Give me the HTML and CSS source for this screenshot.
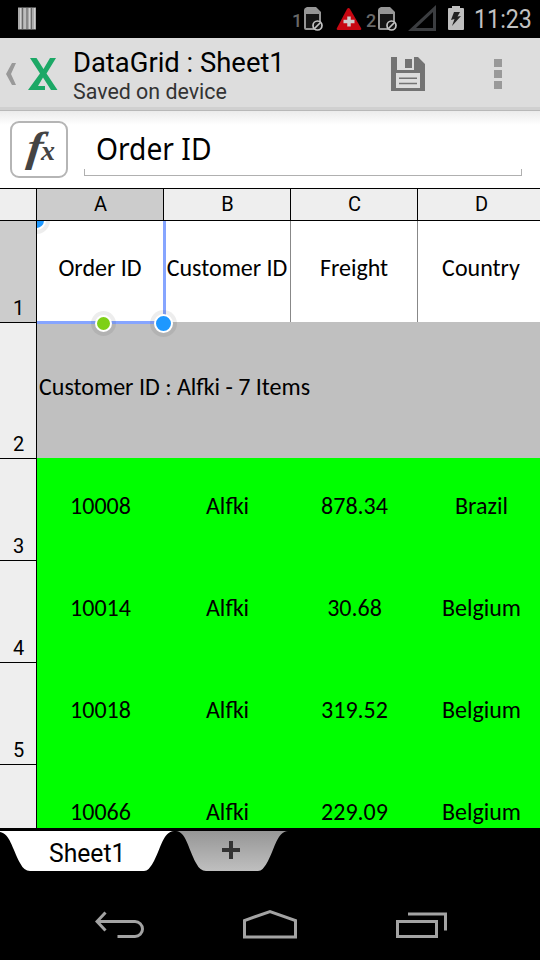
FILE: index.html
```html
<!DOCTYPE html>
<html lang="en">
<head>
<meta charset="utf-8">
<title>DataGrid : Sheet1</title>
<link rel="stylesheet" href="styles.css">
</head>
<body>
<div class="screen">
  <div class="status">
    <svg class="bars" width="18" height="23" viewBox="0 0 18 23"><path fill="#aaa" d="M0 .5h18v22H0z"/><path stroke="#696969" d="M4.500 1v21M9 1v21M13.500 1v21"/><path stroke="#d0d0d0" d="M2.500 1v21M7 1v21M11.500 1v21M16.500 1v21"/></svg>
    <div class="sim one"><span>1</span><svg width="20" height="25" viewBox="0 0 20 25"><path fill="#969696" d="M3 0h9l5 5v16q0 2-2 2H2q-2 0-2-2V3q0-2 3-3z"/><path fill="#161616" d="M2 7h13v14H2z"/><circle cx="13.500" cy="18.500" r="4.500" fill="#161616" stroke="#c4c4c4" stroke-width="1.700"/><path d="M10.500 21.500l6-6" stroke="#c4c4c4" stroke-width="1.700"/></svg></div>
    <svg class="alert" width="26" height="22" viewBox="0 0 26 22"><path fill="#c70712" d="M11 1q1.500-2 3 0l11 19q1 2-1 2H2q-2 0-1-2z"/><path d="M13 8.500v10M7.500 13.500h11" stroke="#ccc" stroke-width="3.500"/></svg>
    <div class="sim two"><span>2</span><svg width="20" height="25" viewBox="0 0 20 25"><path fill="#969696" d="M3 0h9l5 5v16q0 2-2 2H2q-2 0-2-2V3q0-2 3-3z"/><path fill="#161616" d="M2 7h13v14H2z"/><circle cx="13.500" cy="18.500" r="4.500" fill="#161616" stroke="#c4c4c4" stroke-width="1.700"/><path d="M10.500 21.500l6-6" stroke="#c4c4c4" stroke-width="1.700"/></svg></div>
    <svg class="signal" width="28" height="26" viewBox="0 0 28 26"><path fill="#3b3d40" fill-rule="evenodd" d="M28 0v26H0zM25 7v16H8z"/></svg>
    <svg class="battery" width="16" height="24" viewBox="0 0 16 24"><path fill="#bfbfbf" d="M4 0h8v2h3q1 0 1 1v20q0 1-1 1H1q-1 0-1-1V3q0-1 1-1h3z"/><path fill="#222" d="M6 6h6l-2.500 4.500L13 10 4 20l2.500-7L3 14z"/></svg>
    <span class="clock">11:23</span>
  </div>
  <header class="appbar">
    <svg class="back" width="10" height="22" viewBox="0 0 10 22"><path fill="#999" d="M6 0h4L5 11l5 11H6L0 11z"/></svg>
    <svg class="logo" width="30" height="32" viewBox="0 0 30 32"><path fill="#1ca866" d="M2 0h6.500l7 11 6.500-11h6L18.500 15.500 29.500 32H23l-8-12.500-5 8.500h7v4H0L12 15.500z"/></svg>
    <div class="titles"><div class="title">DataGrid : Sheet1</div><div class="sub">Saved on device</div></div>
    <svg class="save" width="34" height="34" viewBox="0 0 34 34"><path fill="#737373" fill-rule="evenodd" d="M0 0h6v13h17V0h4l7 7v27H0zM5 16v15h24V16z"/><path fill="#737373" d="M14 2h7v9h-7z"/><path stroke="#737373" stroke-width="1.500" d="M8 21.300h18M8 26.500h18"/></svg>
    <svg class="more" width="8" height="30" viewBox="0 0 8 30"><path fill="#999" d="M0 0h8v8H0zM0 11h8v8H0zM0 22h8v8H0z"/></svg>
  </header>
  <div class="formula">
    <div class="fx"><span class="f">f</span><span class="x">x</span></div>
    <div class="input"><span>Order ID</span></div>
  </div>
  <div class="columns"><div></div><div class="active">A</div><div>B</div><div>C</div><div>D</div></div>
  <div class="sheet">
    <div class="rownums"><div class="active">1</div><div class="group">2</div><div>3</div><div>4</div><div>5</div><div></div></div>
    <div class="cells">
      <div class="row head"><div class="selected"><span>Order ID</span><i class="corner"></i><i class="fill"></i><i class="handle"></i></div><div><span>Customer ID</span></div><div><span>Freight</span></div><div><span>Country</span></div></div>
      <div class="row caption"><span>Customer ID : Alfki - 7 Items</span></div>
      <div class="row data"><div>10008</div><div>Alfki</div><div>878.34</div><div>Brazil</div></div>
      <div class="row data"><div>10014</div><div>Alfki</div><div>30.68</div><div>Belgium</div></div>
      <div class="row data"><div>10018</div><div>Alfki</div><div>319.52</div><div>Belgium</div></div>
      <div class="row data"><div>10066</div><div>Alfki</div><div>229.09</div><div>Belgium</div></div>
    </div>
  </div>
  <div class="tabs">
    <div class="tab"><svg width="176" height="40" viewBox="0 0 176 40"><path fill="#fff" d="M0 0H174C163 1 161 17 154 30Q149 40 144 40H30Q24 40 20 32C12 17 10 3 0 1z"/></svg><span>Sheet1</span></div>
    <div class="add"><svg width="114" height="40" viewBox="0 0 114 40"><defs><linearGradient id="g" x2="0" y2="1"><stop stop-color="#969696"/><stop offset="1" stop-color="#bfbfbf"/></linearGradient></defs><path fill="url(#g)" d="M0 0H112C101 1 99 17 92 30Q87 40 82 40H30Q24 40 20 32C12 17 10 1 0 0z"/><path stroke="#333" stroke-width="4" d="M46 19h18M55 10v18"/></svg></div>
  </div>
  <nav class="nav">
    <svg width="50" height="28" viewBox="0 0 50 28" fill="none" stroke="#a3a3a3" stroke-width="3"><path d="M2 10.500H40a7.500 7.500 0 0 1 0 15H22.500"/><path d="M10.500 1.500L2 10.500l8.500 9"/></svg>
    <svg width="54" height="30" viewBox="0 0 54 30" fill="none" stroke="#a3a3a3" stroke-width="3"><path d="M1.500 28V11.500L27 2.500l25.500 9V28z"/></svg>
    <svg width="52" height="28" viewBox="0 0 52 28" fill="none" stroke="#a3a3a3" stroke-width="3"><path d="M1.500 10.500h39v15h-39zM12 3h37.500v16.500"/></svg>
  </nav>
</div>
</body>
</html>
```
FILE: styles.css
```css
* { box-sizing: border-box; }
body { margin: 0; background: #000; }
svg { display: block; flex: none; }
.screen { width: 540px; height: 960px; overflow: hidden; display: flex; flex-direction: column; background: #000; font-family: Roboto, sans-serif; color: #000; }
.screen > * { flex: none; }

.status { height: 38px; display: flex; align-items: flex-start; white-space: nowrap; }
.bars { margin: 7px 0 0 18px; }
.sim { display: flex; font-size: 18px; line-height: 28px; font-weight: 500; color: #686868; margin-top: 7px; }
.sim span { width: 12px; }
.sim.one { margin-left: 256px; }
.sim.two { margin-left: 4px; }
.alert { margin: 8px 0 0 12px; }
.signal { margin: 5px 0 0 10px; }
.battery { margin: 6px 0 0 12px; }
.clock { font-size: 25px; line-height: 38px; color: #c2c2c2; margin: 1px 0 0 10px; transform: scaleX(.93); transform-origin: 0 50%; }

.appbar { height: 73px; display: flex; align-items: flex-start; background: #ddd; border-bottom: 1px solid #b8b8b8; box-shadow: inset 0 -3px #d0d0d0; }
.back { margin: 25px 0 0 6px; }
.logo { margin: 20px 0 0 12px; }
.titles { width: 318px; margin: 9px 0 0 15px; white-space: nowrap; }
.title { font-size: 27.4px; line-height: 32px; }
.sub { font-size: 21.4px; line-height: 26px; color: #333; }
.save { margin-top: 19px; }
.more { margin: 21px 0 0 69px; }

.formula { height: 77px; display: flex; align-items: flex-start; background: linear-gradient(#ebebeb, #fff 14px); }
.fx { width: 58px; height: 57px; margin: 10px 0 0 10px; border: 2px solid #b5b5b5; border-radius: 9px; background: #fff; display: flex; font: italic bold 42px/49px "Liberation Serif", serif; color: #444; padding-left: 16px; }
.fx span { display: block; }
.fx .f { width: 13px; transform: skewX(-6deg) scaleX(1.15); }
.fx .x { font-size: 28px; line-height: 55px; }
.input { width: 438px; height: 59px; margin: 6px 0 0 16px; padding: 12px 0 0 12px; font-family: "Noto Sans", sans-serif; font-size: 30px; line-height: 40px; white-space: nowrap; background: linear-gradient(#b0b0b0, #b0b0b0) 0 100% / 1px 6px no-repeat, linear-gradient(#b0b0b0, #b0b0b0) 100% 100% / 1px 6px no-repeat; border-bottom: 1px solid #b0b0b0; }
.input span { display: inline-block; transform: scaleX(.94); transform-origin: 0 50%; }

.columns { height: 33px; display: grid; grid-template-columns: 37px repeat(4, 127px); border-top: 1px solid #000; border-bottom: 1px solid #000; font-size: 20px; line-height: 31px; text-align: center; background: #eee; }
.columns div { border-right: 1px solid #000; padding-left: 1px; }
.columns .active, .rownums .active { background: #ccc; }

.sheet { height: 607px; display: flex; overflow: hidden; }
.rownums { width: 37px; flex: none; border-right: 1px solid #000; background: #eee; font-size: 20px; line-height: 28px; text-align: center; }
.rownums div { height: 102px; display: flex; align-items: flex-end; justify-content: center; border-bottom: 1px solid #000; padding-left: 1px; }
.rownums .group { height: 136px; }
.cells { width: 508px; flex: none; font-family: Carlito, Lato, sans-serif; font-size: 24px; line-height: 30px; white-space: nowrap; }
.row { display: grid; grid-template-columns: repeat(4, 127px); height: 102px; align-items: center; text-align: center; padding-bottom: 7px; }
.row.head { height: 101px; background: #fff; padding: 0; align-items: stretch; }
.head > div { border-right: 1px solid #888; display: flex; align-items: center; justify-content: center; padding: 0 0 7px; }
.head > .selected { position: relative; width: 129px; border-right: 3px solid #86a5ff; z-index: 1; }
.selected::after { content: ""; position: absolute; left: 0; right: -3px; bottom: -2px; height: 3px; background: #86a5ff; }
.selected i { position: absolute; z-index: 2; border-radius: 50%; background: #1e98ff; border: 2px solid #fff; box-shadow: 0 0 0 4px rgba(0, 0, 0, .07); }
.selected .handle { width: 19px; height: 19px; right: -10px; bottom: -11px; }
.selected .fill { width: 17px; height: 17px; left: 58px; bottom: -10px; background: #7ed017; }
.selected .corner { width: 19px; height: 19px; left: -10px; top: -10px; clip-path: inset(10px -5px -5px 10px); }
.row.caption { display: block; height: 136px; text-align: left; background: #c0c0c0; padding: 50px 0 0 2px; }
.row.data { background: #0f0; }

.tabs { height: 43px; padding-top: 3px; display: flex; }
.tab { width: 176px; display: grid; }
.tab > * { grid-area: 1 / 1; }
.tab span { padding-left: 49px; font-size: 26px; line-height: 45px; transform: scaleX(.95); transform-origin: 49px 50%; }
.nav { flex: 1; display: flex; align-items: flex-start; padding: 38px 0 0 95px; }
.nav svg + svg { margin-left: 98px; }
.nav svg:first-child { margin-top: 2px; }
.nav svg:last-child { margin-left: 99px; margin-top: 2px; }
```
